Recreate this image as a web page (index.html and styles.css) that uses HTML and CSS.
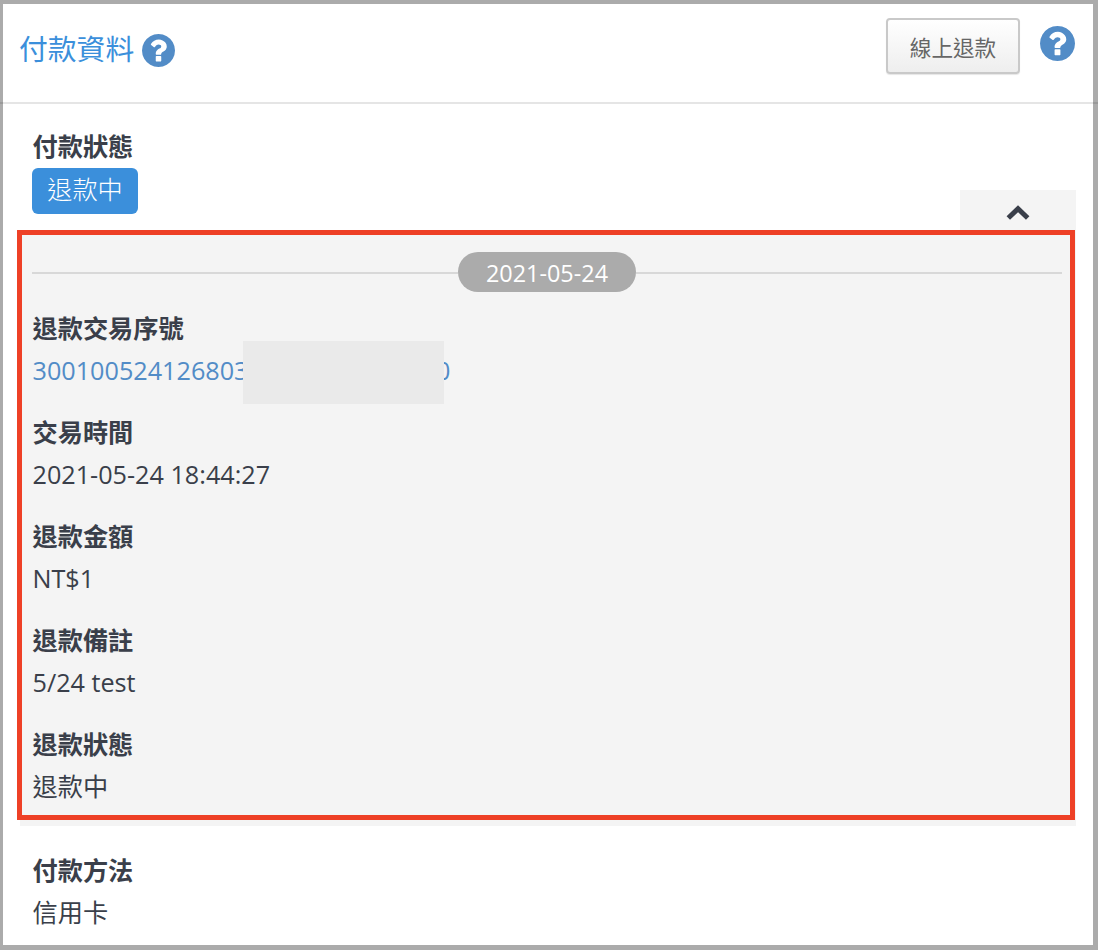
FILE: index.html
```html
<!DOCTYPE html>
<html lang="zh-Hant">
<head>
<meta charset="utf-8">
<title>付款資料</title>
<link rel="stylesheet" href="styles.css">
</head>
<body>
<svg class="sprite" aria-hidden="true">
  <symbol id="help" viewBox="128 128 1536 1536"><path d="M1024 1376v-192q0-14-9-23t-23-9H800q-14 0-23 9t-9 23v192q0 14 9 23t23 9h192q14 0 23-9t9-23zm256-672q0-88-55.500-163T1086 425t-170-41q-243 0-371 213-15 24 8 42l132 100q7 6 19 6 16 0 25-12 53-68 86-92 34-24 86-24 48 0 85.500 26t37.500 59q0 38-20 61t-68 45q-63 28-115.500 86.500T768 1020v36q0 14 9 23t23 9h192q14 0 23-9t9-23q0-19 21.500-49.500t54.500-49.500q32-18 49-28.500t46-35 44.500-48 28-60.500 12.500-81zm384 192q0 209-103 385.500T1281.500 1561 896 1664t-385.500-103T231 1281.500 128 896t103-385.500T510.500 231 896 128t385.500 103T1561 510.500 1664 896z"/></symbol>
</svg>
<main class="card">
  <header class="card-header">
    <h1 class="title">付款資料</h1>
    <svg class="help"><use href="#help"/></svg>
    <button class="refund-button">線上退款</button>
    <svg class="help help-large"><use href="#help"/></svg>
  </header>
  <section class="status">
    <div>
      <div class="label">付款狀態</div>
      <span class="badge">退款中</span>
    </div>
    <div class="toggle">
      <svg class="chevron" viewBox="0 0 24 16"><path d="M2.300 13L12 3.800L21.700 13"/></svg>
    </div>
  </section>
  <section class="panel">
    <div class="details">
      <div class="date-row"><span class="date">2021-05-24</span></div>
      <dl class="list">
        <div class="item"><dt class="label">退款交易序號</dt><dd class="value serial"><a class="link">300100524126803</a><a class="link">0</a><span class="mask"></span></dd></div>
        <div class="item"><dt class="label">交易時間</dt><dd class="value">2021-05-24 18:44:27</dd></div>
        <div class="item"><dt class="label">退款金額</dt><dd class="value">NT$1</dd></div>
        <div class="item"><dt class="label">退款備註</dt><dd class="value">5/24 test</dd></div>
        <div class="item"><dt class="label">退款狀態</dt><dd class="value">退款中</dd></div>
      </dl>
    </div>
  </section>
  <dl class="list method">
    <div class="item"><dt class="label">付款方法</dt><dd class="value">信用卡</dd></div>
  </dl>
</main>
</body>
</html>
```
FILE: styles.css
```css
* { box-sizing: border-box; }
body {
  margin: 0;
  height: 950px;
  overflow: hidden;
  padding: 4px 5px 5px 3px;
  background: #ababab;
  color: #3a3f4a;
  font-family: "Open Sans", "Noto Sans CJK TC", sans-serif;
  font-size: 25.2px;
  line-height: 40px;
}
.sprite { position: absolute; width: 0; height: 0; }
.card { height: 941px; background: #fff; }
.card-header {
  display: flex;
  align-items: flex-start;
  height: 100px;
  margin: 0 -5px 0 -3px;
  padding: 14px 23px 0 19px;
  border-bottom: 2px solid rgba(0, 0, 0, .1);
}
.title {
  margin: 11px 8px 0 0;
  color: #3b8fdb;
  font-size: 28.8px;
  font-weight: 400;
  line-height: 40px;
}
.help { width: 33px; height: 33px; margin-top: 16px; fill: #528cc7; }
.help-large { width: 35px; height: 35px; margin: 8px 0 0 20px; }
.refund-button {
  width: 134px;
  height: 56px;
  margin-left: auto;
  padding: 1px 0 0;
  border: 2px solid #c9c9c9;
  border-radius: 4px;
  background: linear-gradient(#fff, #eee);
  box-shadow: 0 1px 1px rgba(0, 0, 0, .1);
  color: #666;
  font-family: inherit;
  font-size: 21.6px;
}
.status {
  display: flex;
  justify-content: space-between;
  align-items: flex-end;
  height: 126px;
  padding: 22px 17px 0 29px;
}
.status > div:first-child { align-self: flex-start; }
.label { height: 42px; padding-left: .5px; font-weight: 700; white-space: nowrap; }
.badge {
  display: block;
  width: 106px;
  height: 46px;
  border-radius: 6px;
  background: #3b8fdb;
  color: #fff;
  font-weight: 300;
  line-height: 42px;
  text-align: center;
}
.toggle {
  display: flex;
  justify-content: center;
  width: 116px;
  height: 40px;
  padding: 15px 1px 0 0;
  background: #f4f4f4;
}
.chevron { width: 24px; height: 16px; fill: none; stroke: #3a3f4a; stroke-width: 5; }
.panel {
  height: 596px;
  margin: 0 17px;
  background: #f4f4f4;
}
.details {
  width: 1058px;
  height: 590px;
  margin-left: -3px;
  padding: 17px 8px 0 10px;
  border: 5px solid #ee4026;
  background: #f4f4f4;
}
.date-row { display: flex; align-items: center; height: 40px; }
.date-row::before, .date-row::after { content: ""; flex: 1; height: 2px; margin-top: 2px; background: #d8d8d8; }
.date {
  width: 178px;
  height: 40px;
  border-radius: 20px;
  background: #ababab;
  color: #fff;
  font-size: 23.4px;
  line-height: 42px;
  text-align: center;
}
.list { margin: 0; }
.details .list { padding-top: 16px; }
.item { height: 84px; margin-bottom: 20px; }
.value { height: 42px; margin: 0; padding-left: .5px; }
.serial { position: relative; display: flex; justify-content: space-between; width: 418.5px; }
.link { color: #528cc7; }
.mask {
  position: absolute;
  left: 211px;
  top: -9px;
  width: 201px;
  height: 63px;
  background: #eaeaea;
}
.method { padding: 24px 29px 0; }
```
